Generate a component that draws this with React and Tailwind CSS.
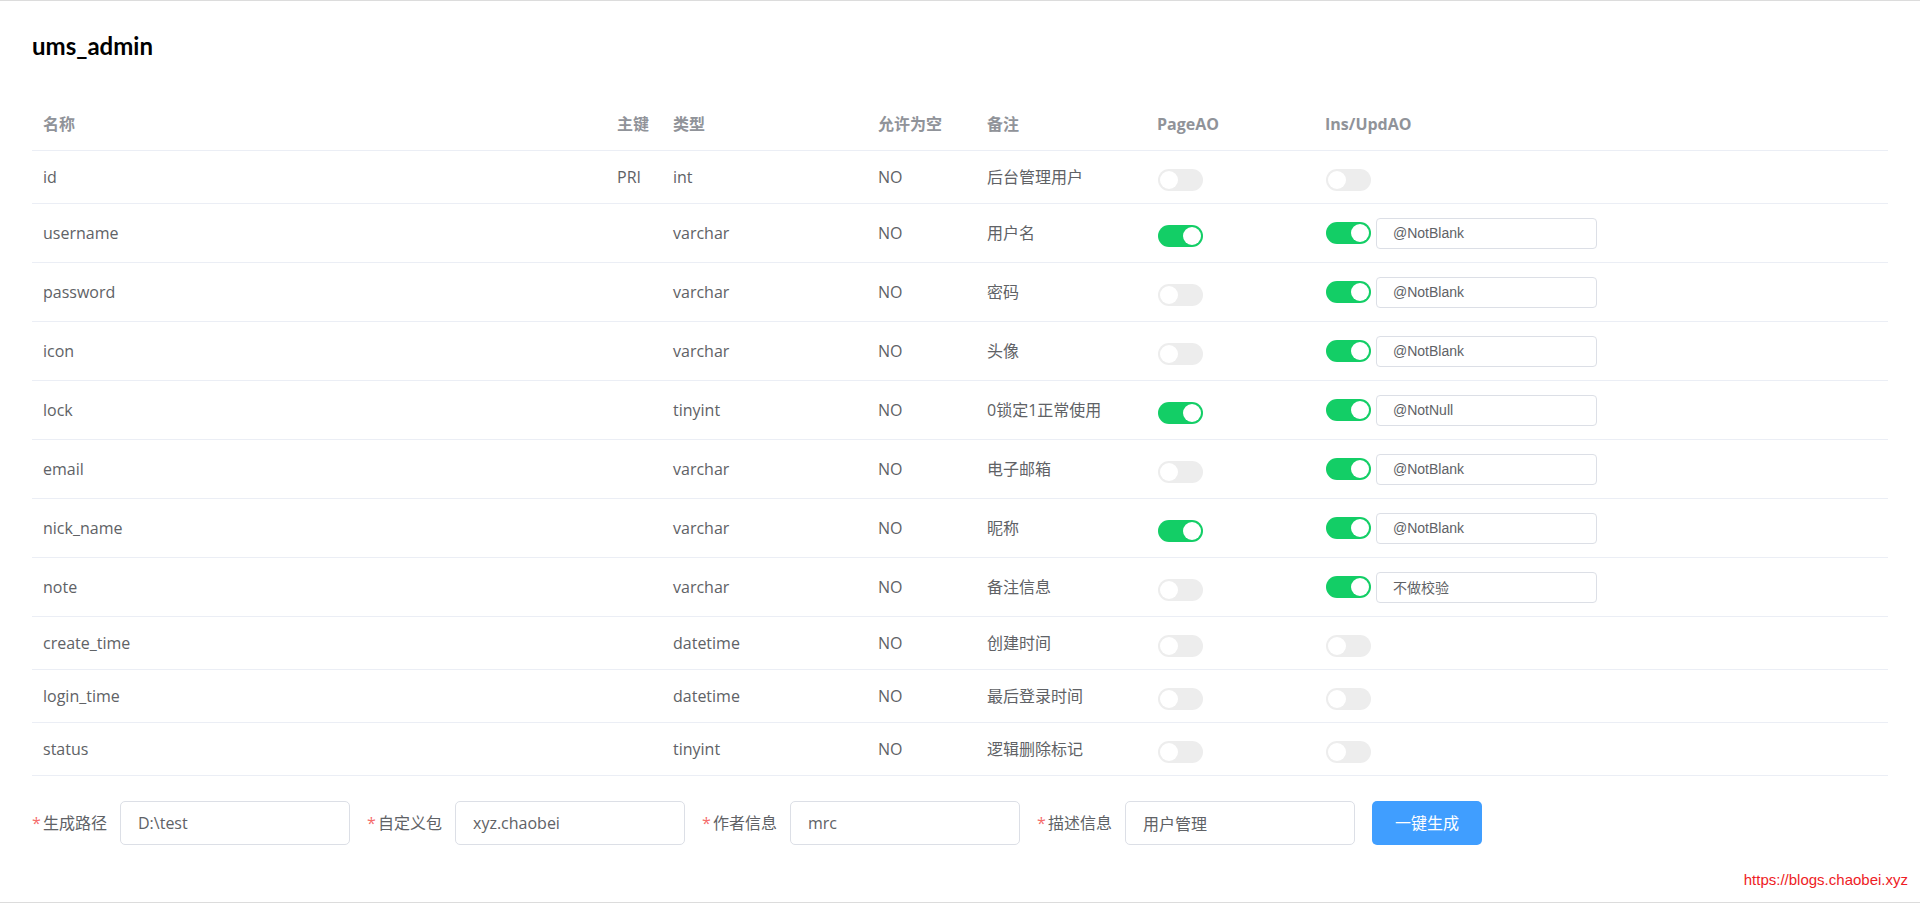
import React from 'react';

const rows = [
  { name: 'id', pk: 'PRI', type: 'int', nul: 'NO', note: '后台管理用户', page: false, ins: false },
  { name: 'username', type: 'varchar', nul: 'NO', note: '用户名', page: true, ins: true, rule: '@NotBlank' },
  { name: 'password', type: 'varchar', nul: 'NO', note: '密码', page: false, ins: true, rule: '@NotBlank' },
  { name: 'icon', type: 'varchar', nul: 'NO', note: '头像', page: false, ins: true, rule: '@NotBlank' },
  { name: 'lock', type: 'tinyint', nul: 'NO', note: '0锁定1正常使用', page: true, ins: true, rule: '@NotNull' },
  { name: 'email', type: 'varchar', nul: 'NO', note: '电子邮箱', page: false, ins: true, rule: '@NotBlank' },
  { name: 'nick_name', type: 'varchar', nul: 'NO', note: '昵称', page: true, ins: true, rule: '@NotBlank' },
  { name: 'note', type: 'varchar', nul: 'NO', note: '备注信息', page: false, ins: true, rule: '不做校验' },
  { name: 'create_time', type: 'datetime', nul: 'NO', note: '创建时间', page: false, ins: false },
  { name: 'login_time', type: 'datetime', nul: 'NO', note: '最后登录时间', page: false, ins: false },
  { name: 'status', type: 'tinyint', nul: 'NO', note: '逻辑删除标记', page: false, ins: false },
];

const fields = [
  { label: '生成路径', value: 'D:\\test' },
  { label: '自定义包', value: 'xyz.chaobei' },
  { label: '作者信息', value: 'mrc' },
  { label: '描述信息', value: '用户管理' },
];

const cols = 'grid grid-cols-[574px_56px_205px_109px_170px_168px_1fr] items-center';

function Toggle({ on, low }) {
  return (
    <span
      className={`flex h-[22px] w-[45px] shrink-0 rounded-full p-[2px] ${on ? 'justify-end bg-[#13ce66]' : 'justify-start bg-[#ededed]'} ${low ? 'mt-[5px]' : ''}`}
    >
      <span className="h-[18px] w-[18px] rounded-full bg-white" />
    </span>
  );
}

export default function App() {
  return (
    <div className="relative h-[903px] w-full overflow-hidden border-t border-b border-[#dcdcdc] bg-white px-[32px] pt-[30px] font-['Open_Sans','Noto_Sans_CJK_SC',sans-serif] text-[16px] text-[#606266]">
      <h3 className="font-['Lato','Noto_Sans_CJK_SC',sans-serif] text-[24px] leading-[29px] font-bold text-black">ums_admin</h3>

      {/* 字段表 */}
      <div className="mt-[38px]">
        <div className={`${cols} h-[53px] border-b border-[#ebeef5] font-bold text-[#909399]`}>
          <div className="pl-[11px]">名称</div>
          <div className="pl-[11px]">主键</div>
          <div className="pl-[11px]">类型</div>
          <div className="pl-[11px]">允许为空</div>
          <div className="pl-[11px]">备注</div>
          <div className="pl-[11px]">PageAO</div>
          <div className="pl-[11px]">Ins/UpdAO</div>
        </div>

        {rows.map((r) => (
          <div
            key={r.name}
            className={`${cols} border-b border-[#ebeef5] leading-6 ${r.rule ? 'h-[59px]' : 'h-[53px]'}`}
          >
            <div className="pl-[11px]">{r.name}</div>
            <div className="pl-[11px]">{r.pk || ''}</div>
            <div className="pl-[11px]">{r.type}</div>
            <div className="pl-[11px]">{r.nul}</div>
            <div className="pl-[11px]">{r.note}</div>
            <div className="flex items-center pl-[12px]">
              <Toggle on={r.page} low />
            </div>
            <div className="flex items-center gap-[5px] pl-[12px]">
              <Toggle on={r.ins} low={!r.rule} />
              {r.rule && (
                <input
                  readOnly
                  value={r.rule}
                  className="h-[31px] w-[221px] rounded-[4px] border border-[#dcdfe6] pl-[16px] font-['Liberation_Sans','Noto_Sans_CJK_SC',sans-serif] text-[14px] text-[#606266] outline-none"
                />
              )}
            </div>
          </div>
        ))}
      </div>

      {/* 生成参数 */}
      <div className="mt-[25px] flex items-center">
        {fields.map((f) => (
          <div key={f.label} className="mr-[17px] flex items-center">
            <label className="flex w-[88px] items-center">
              <span className="w-[11px] text-[#f56c6c]">*</span>
              {f.label}
            </label>
            <input
              readOnly
              value={f.value}
              className="h-[44px] w-[230px] rounded-[5px] border border-[#dcdfe6] px-[17px] text-[16px] text-[#606266] outline-none"
            />
          </div>
        ))}
        <button className="h-[44px] w-[110px] rounded-[5px] bg-[#409eff] text-[16px] text-white">一键生成</button>
      </div>

      <div className="absolute right-[12px] bottom-[11px] font-['Liberation_Sans',sans-serif] text-[15px] text-[#ee1c25]">
        https://blogs.chaobei.xyz
      </div>
    </div>
  );
}
